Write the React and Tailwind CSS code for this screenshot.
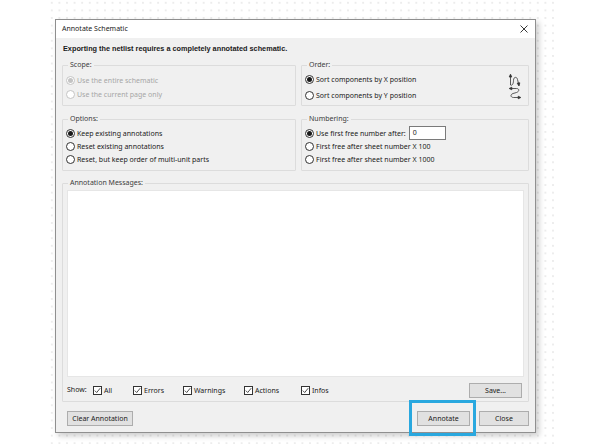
import React from 'react'

const font = "font-['Noto_Sans','Liberation_Sans',sans-serif]"

function Radio({ checked, disabled, label, className = '' }) {
    return (
        <div className={`flex items-center ${className}`}>
            <span
                className={`w-[9px] h-[9px] rounded-full border flex items-center justify-center shrink-0 bg-white ${
                    disabled ? 'border-[#c4c4c4]' : 'border-[#333333]'
                }`}
            >
                {checked && (
                    <span className={`w-[5px] h-[5px] rounded-full ${disabled ? 'bg-[#c4c4c4]' : 'bg-[#1a1a1a]'}`} />
                )}
            </span>
            <span className={`ml-[2px] leading-none ${disabled ? 'text-[#a6a6a6]' : 'text-[#1a1a1a]'}`}>{label}</span>
        </div>
    )
}

function Check({ label, width }) {
    return (
        <div className="flex items-center" style={{ width }}>
            <span className="w-[9px] h-[9px] border border-[#333333] bg-white flex items-center justify-center shrink-0">
                <svg width="7" height="7" viewBox="0 0 7 7">
                    <path d="M0.8 3.6 L2.7 5.5 L6.2 1.2" fill="none" stroke="#222" strokeWidth="0.8" />
                </svg>
            </span>
            <span className="ml-[2px] leading-none text-[#1a1a1a]">{label}</span>
        </div>
    )
}

function Group({ title, className = '', children }) {
    return (
        <fieldset className={`border border-[#dcdcdc] rounded-[1px] ${className}`}>
            <legend className="ml-[5px] px-[2px] h-[10px] leading-[10px] text-[#3c3c3c]">{title}</legend>
            {children}
        </fieldset>
    )
}

function Button({ children, className = '' }) {
    return (
        <button className={`h-[15px] border border-[#adadad] bg-[#e1e1e1] text-[#1a1a1a] leading-none ${className}`}>
            {children}
        </button>
    )
}

// icon on the right of the Order box
function OrderIcon() {
    return (
        <svg width="14" height="27" viewBox="0 0 14 27" fill="none" stroke="#333" strokeWidth="0.8">
            <path d="M2.5 12 L2.5 2.5" />
            <path d="M1.2 4 L2.5 1.2 L3.8 4 Z" fill="#333" />
            <path d="M2.5 12 C4 13 5.5 11 5.5 7.5 C5.5 3.5 9 3.5 9.5 6.5 L10.5 10.5" />
            <path d="M9.2 10.2 L11 13 L11.8 9.8 Z" fill="#333" />
            <path d="M3.5 15.5 L8.5 15.5 C11.5 15.5 11.5 18.5 8.5 19.5 L5 20.5 C2 21.5 2.5 24.5 5.5 24.5 L10.5 24.5" />
            <path d="M3.8 14.2 L1.2 15.5 L3.8 16.8 Z" fill="#333" />
            <path d="M10.2 23.2 L12.8 24.5 L10.2 25.8 Z" fill="#333" />
        </svg>
    )
}

export default function App() {
    return (
        <div className={`w-[592px] h-[444px] bg-white overflow-hidden text-[7px] ${font}`}>
            <div className="ml-[46px] w-[508px] h-[444px] pt-[19px] pl-[9px] bg-[radial-gradient(circle,#d2d2d2_0.5px,transparent_0.8px)] bg-[length:7.6px_7.6px] bg-[position:2px_-1px]">
                {/* Dialog */}
                <div className="w-[481px] h-[414px] border border-[#8f8f8f] bg-[#f0f0f0] shadow-[3px_3px_6px_rgba(0,0,0,0.2)] flex flex-col">
                    {/* Title bar */}
                    <div className="h-[18px] bg-white flex items-center justify-between pl-[6px] pr-[7px]">
                        <span className="text-[#1a1a1a]">Annotate Schematic</span>
                        <svg width="8" height="8" viewBox="0 0 8 8" stroke="#222" strokeWidth="0.9">
                            <path d="M0.5 0.5 L7.5 7.5 M7.5 0.5 L0.5 7.5" />
                        </svg>
                    </div>

                    {/* Body */}
                    <div className="flex-1 px-[6px] flex flex-col">
                        <div className="mt-[6px] h-[10px] leading-[10px] pl-[1px] font-['Liberation_Sans',Arial,sans-serif] font-bold text-[7.3px] text-[#1a1a1a]">
                            Exporting the netlist requires a completely annotated schematic.
                        </div>

                        <div className="mt-[6px] grid grid-cols-[234px_228px] gap-x-[5px] gap-y-[8px]">
                            <Group title="Scope:" className="h-[46px]">
                                <div className="pl-[3px] pt-[3px]">
                                    <Radio className="h-[14px]" checked disabled label="Use the entire schematic" />
                                    <Radio className="h-[14px]" disabled label="Use the current page only" />
                                </div>
                            </Group>
                            <Group title="Order:" className="h-[46px]">
                                <div className="pl-[3px] pr-[6px] flex items-start justify-between">
                                    <div className="pt-[1px]">
                                        <Radio className="h-[16px]" checked label="Sort components by X position" />
                                        <Radio className="h-[16px]" label="Sort components by Y position" />
                                    </div>
                                    <div className="pt-[3px]">
                                        <OrderIcon />
                                    </div>
                                </div>
                            </Group>

                            <Group title="Options:" className="h-[57px]">
                                <div className="pl-[3px] pt-[2px]">
                                    <Radio className="h-[14px]" checked label="Keep existing annotations" />
                                    <Radio className="h-[13px]" label="Reset existing annotations" />
                                    <Radio className="h-[13px]" label="Reset, but keep order of multi-unit parts" />
                                </div>
                            </Group>
                            <Group title="Numbering:" className="h-[57px]">
                                <div className="pl-[3px] pt-[2px]">
                                    <div className="h-[14px] flex items-center">
                                        <Radio checked label="Use first free number after:" />
                                        <div className="ml-[3px] w-[37px] h-[14px] border border-[#7a7a7a] bg-white flex items-center pl-[3px] text-[#1a1a1a]">
                                            0
                                        </div>
                                    </div>
                                    <Radio className="h-[13px]" label="First free after sheet number X 100" />
                                    <Radio className="h-[13px]" label="First free after sheet number X 1000" />
                                </div>
                            </Group>
                        </div>

                        {/* Annotation messages */}
                        <Group title="Annotation Messages:" className="mt-[7px] h-[224px] flex flex-col">
                            <div className="mx-[4px] mt-[2px] h-[187px] bg-white border border-[#e6e6e6]" />
                            <div className="mt-[6px] h-[15px] flex items-center pl-[4px] pr-[6px]">
                                <span className="w-[26px] text-[#1a1a1a]">Show:</span>
                                <Check label="All" width={40} />
                                <Check label="Errors" width={50} />
                                <Check label="Warnings" width={61} />
                                <Check label="Actions" width={57} />
                                <Check label="Infos" width={40} />
                                <Button className="ml-auto w-[53px]">Save...</Button>
                            </div>
                        </Group>

                        {/* Bottom buttons */}
                        <div className="mt-[9px] flex items-center">
                            <Button className="ml-[5px] w-[66px]">Clear Annotation</Button>
                            <div className="ml-auto relative">
                                <Button className="w-[53px]">Annotate</Button>
                                <div className="absolute -top-[11px] -left-[8px] -right-[6px] -bottom-[10px] border-[3px] border-[#29a8df] pointer-events-none" />
                            </div>
                            <Button className="ml-[9px] w-[50px]">Close</Button>
                        </div>
                    </div>
                </div>
            </div>
        </div>
    )
}
